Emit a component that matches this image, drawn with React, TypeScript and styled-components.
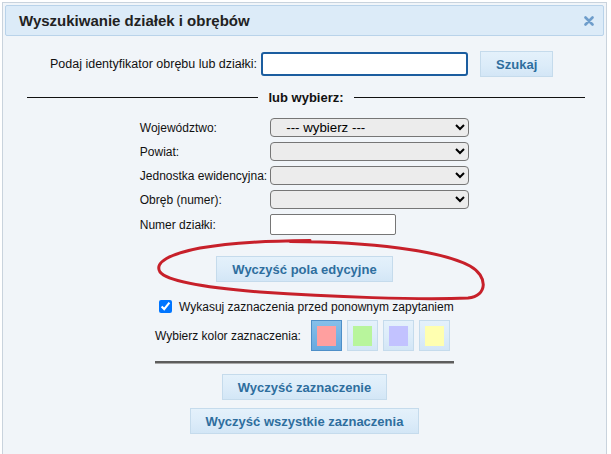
import React from "react";
import styled, { createGlobalStyle } from "styled-components";

const Global = createGlobalStyle`
  html, body { margin: 0; padding: 0; background: #ffffff; }
  body { font-family: "Liberation Sans", Arial, sans-serif; color: #000; }
  * { box-sizing: border-box; }
`;

const Page = styled.div`
  position: relative;
  width: 611px;
  height: 454px;
  overflow: hidden;
  padding: 2px 0 0 2px;
`;

const Dialog = styled.div`
  width: 605px;
  height: 470px;
  border: 1px solid #c9d3dd;
  padding: 2px;
  background: #f1f5f9;
`;

const TitleBar = styled.div`
  height: 31px;
  display: flex;
  align-items: center;
  justify-content: space-between;
  padding: 0 9px 0 13px;
  background: #dcebf8;
  border: 1px solid #b9d3ea;
  border-radius: 2px;
`;

const Title = styled.span`
  font-weight: bold;
  font-size: 15px;
  color: #222222;
`;

const CloseButton = styled.span`
  display: flex;
  width: 10px;
  height: 10px;
`;

const Body = styled.div`
  display: flex;
  flex-direction: column;
  padding-top: 15px;
`;

const SearchRow = styled.div`
  display: flex;
  align-items: center;
  padding-left: 45px;
  height: 26px;
`;

const Label = styled.span<{ $size?: number }>`
  font-size: ${(p) => p.$size ?? 12}px;
  color: #111;
  white-space: nowrap;
`;

const IdInput = styled.input`
  width: 207px;
  height: 24px;
  margin-left: 4px;
  border: 2px solid #1b5d9f;
  border-radius: 3px;
  background: #fff;
  outline: none;
`;

const Button = styled.button<{ $ml?: number }>`
  height: 26px;
  padding: 0 15px;
  margin-left: ${(p) => p.$ml ?? 0}px;
  border: 1px solid #c5dbec;
  border-radius: 0;
  background: linear-gradient(to bottom, #e4f1fb 0%, #dcecf9 55%, #d3e6f6 100%);
  color: #2e6e9e;
  font-family: "Liberation Sans", Arial, sans-serif;
  font-weight: bold;
  font-size: 13px;
  cursor: pointer;
  white-space: nowrap;
`;

const Separator = styled.div`
  display: flex;
  align-items: center;
  gap: 10px;
  margin: 13px 19px 0 22px;
`;

const SepLine = styled.div`
  flex: 1;
  height: 1.5px;
  background: #111;
`;

const SepText = styled.span`
  font-weight: bold;
  font-size: 13px;
  color: #111;
`;

const FormGrid = styled.div`
  display: grid;
  grid-template-columns: auto auto;
  column-gap: 3px;
  row-gap: 5px;
  justify-content: center;
  align-items: center;
  margin-top: 13px;
`;

const Select = styled.select`
  width: 199px;
  height: 19px;
  border: 1px solid #767676;
  border-radius: 4px;
  background-color: #ececec;
  font-family: "Liberation Sans", Arial, sans-serif;
  font-size: 13.3px;
  color: #000;
  padding: 0 0 0 11px;
`;

const SmallInput = styled.input`
  width: 126px;
  height: 21px;
  border: 1px solid #767676;
  border-radius: 2px;
  background: #fff;
`;

const Center = styled.div<{ $mt: number }>`
  display: flex;
  justify-content: center;
  margin-top: ${(p) => p.$mt}px;
`;

const OptionsBlock = styled.div`
  width: 299px;
  margin: 16px auto 0;
  display: flex;
  flex-direction: column;
`;

const CheckRow = styled.label`
  display: flex;
  align-items: center;
  height: 17px;
`;

const Check = styled.input`
  width: 13px;
  height: 13px;
  margin: 0 7px 0 4px;
  accent-color: #0075ff;
`;

const ColorRow = styled.div`
  display: flex;
  align-items: center;
  margin-top: 5px;
  gap: 5px;
`;

const Swatches = styled.div`
  display: flex;
  gap: 5px;
  margin-left: 5px;
`;

const SwatchButton = styled.button<{ $active?: boolean }>`
  width: 31px;
  height: 31px;
  padding: 0;
  display: flex;
  align-items: center;
  justify-content: center;
  border: 1px solid ${(p) => (p.$active ? "#4e8fc8" : "#c5dbec")};
  background: ${(p) =>
    p.$active
      ? "linear-gradient(to bottom, #86bfe9 0%, #74b2e3 60%, #68a9df 100%)"
      : "linear-gradient(to bottom, #e4f1fb 0%, #dcecf9 55%, #d3e6f6 100%)"};
  cursor: pointer;
`;

const SwatchColor = styled.span<{ $c: string }>`
  width: 19px;
  height: 20px;
  background: ${(p) => p.$c};
`;

const Rule = styled.div`
  height: 3px;
  margin-top: 10px;
  border-top: 2px solid #5d5d5d;
  border-bottom: 1px solid #a8a8a8;
`;

const Annotation = styled.svg`
  position: absolute;
  left: 0;
  top: 0;
  pointer-events: none;
`;

const colors = ["#ff9f9f", "#b8f59c", "#c2c2ff", "#ffffb0"];

export default function App() {
  return (
    <>
      <Global />
      <Page>
        <Dialog>
          <TitleBar>
            <Title>Wyszukiwanie działek i obrębów</Title>
            <CloseButton>
              <svg width="10" height="10" viewBox="0 0 10 10">
                <path d="M1.5 1.5 L8.5 8.5 M8.5 1.5 L1.5 8.5" stroke="#6e9dcb" strokeWidth="2.6" strokeLinecap="round" />
              </svg>
            </CloseButton>
          </TitleBar>
          <Body>
            <SearchRow>
              <Label $size={12.5}>Podaj identyfikator obrębu lub działki:</Label>
              <IdInput type="text" />
              <Button $ml={12}>Szukaj</Button>
            </SearchRow>
            <Separator>
              <SepLine />
              <SepText>lub wybierz:</SepText>
              <SepLine />
            </Separator>
            <FormGrid>
              <Label>Województwo:</Label>
              <Select defaultValue="w">
                <option value="w">--- wybierz ---</option>
              </Select>
              <Label>Powiat:</Label>
              <Select />
              <Label>Jednostka ewidencyjna:</Label>
              <Select />
              <Label>Obręb (numer):</Label>
              <Select />
              <Label>Numer działki:</Label>
              <SmallInput type="text" />
            </FormGrid>
            <Center $mt={21}>
              <Button>Wyczyść pola edycyjne</Button>
            </Center>
            <OptionsBlock>
              <CheckRow>
                <Check type="checkbox" defaultChecked />
                <Label>Wykasuj zaznaczenia przed ponownym zapytaniem</Label>
              </CheckRow>
              <ColorRow>
                <Label>Wybierz kolor zaznaczenia:</Label>
                <Swatches>
                  {colors.map((c, i) => (
                    <SwatchButton key={c} $active={i === 0}>
                      <SwatchColor $c={c} />
                    </SwatchButton>
                  ))}
                </Swatches>
              </ColorRow>
              <Rule />
            </OptionsBlock>
            <Center $mt={10}>
              <Button>Wyczyść zaznaczenie</Button>
            </Center>
            <Center $mt={8}>
              <Button>Wyczyść wszystkie zaznaczenia</Button>
            </Center>
          </Body>
        </Dialog>
        <Annotation width="611" height="454" viewBox="0 0 611 454">
          <path
            d="M290 241.5 C 370 242, 440 250, 470 266 C 488 276, 488 296, 468 298 C 420 300, 330 297, 260 292 C 210 288, 168 282, 160 272 C 154 262, 170 254, 200 248 C 235 242, 270 241, 310 240.5"
            fill="none"
            stroke="#c7202a"
            strokeWidth="3"
            strokeLinecap="round"
          />
        </Annotation>
      </Page>
    </>
  );
}
